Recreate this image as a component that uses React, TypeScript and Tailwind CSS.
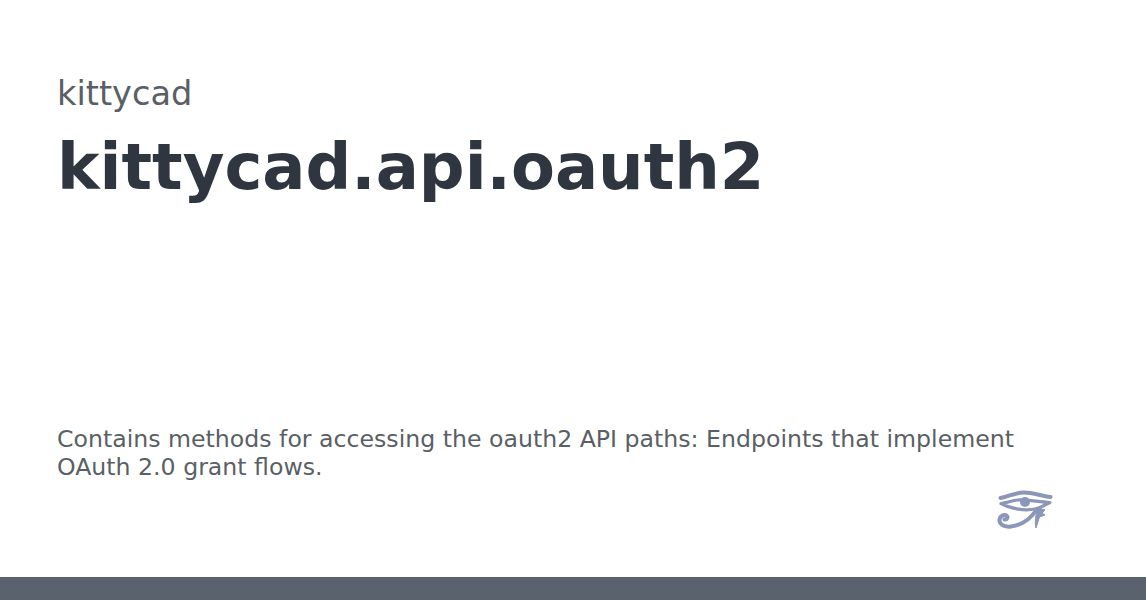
function EyeOfHorus() {
  return (
    <svg viewBox="0 0 56 40" className="w-[56px] h-[40px]" fill="none" stroke="#8b97b8" strokeLinecap="round" strokeLinejoin="round">
      {/* brow */}
      <path d="M3.5 8 C 12 6.5, 18 2.5, 27 2.5 C 36 2.5, 44 6, 53.5 7" strokeWidth="4" />
      {/* eye outline */}
      <path d="M4 13.5 C 11 12.5, 15 10.5, 21 10 C 30 9.5, 42 12, 53 12.5 C 47 15, 44 18, 38 19 C 28 21, 14 19, 4 13.5 Z" strokeWidth="3.2" />
      <circle cx="28" cy="12" r="5" fill="#8b97b8" stroke="none" />
      {/* spiral tail */}
      <path d="M40 19 C 35 27, 27 35, 14 36.5 C 6 37.5, 2 33.5, 2.5 29.5 C 3 26, 7 24, 9.5 25.5 C 11.5 27, 10 30, 7.5 29.5" strokeWidth="4" />
      {/* tear */}
      <path d="M41 18 L 48 20 L 45 23 L 48 25 L 42.5 27 L 39 38 C 37.5 33, 38.5 25, 41 18 Z" fill="#8b97b8" strokeWidth="1" />
    </svg>
  );
}

export default function App() {
  return (
    <div className="h-[600px] w-full flex flex-col bg-white font-['DejaVu_Sans',sans-serif]">
      <div className="flex-1 flex flex-col justify-between px-[57px] pt-[74px]">
        <div>
          <div className="text-[33.6px] leading-[40px] text-[#5a5f66]">kittycad</div>
          <h1 className="mt-[15px] text-[64px] leading-[76px] font-bold text-[#2f3640]">kittycad.api.oauth2</h1>
        </div>
        <div>
          <p className="text-[23.64px] leading-[28px] text-[#5a5f66] max-w-[1000px]">
            Contains methods for accessing the oauth2 API paths: Endpoints that implement OAuth 2.0 grant flows.
          </p>
          <div className="flex justify-end mt-[9px] pr-[36px] pb-[47px]">
            <EyeOfHorus />
          </div>
        </div>
      </div>
      <div className="h-[23px] bg-[#5a626d]" />
    </div>
  );
}
